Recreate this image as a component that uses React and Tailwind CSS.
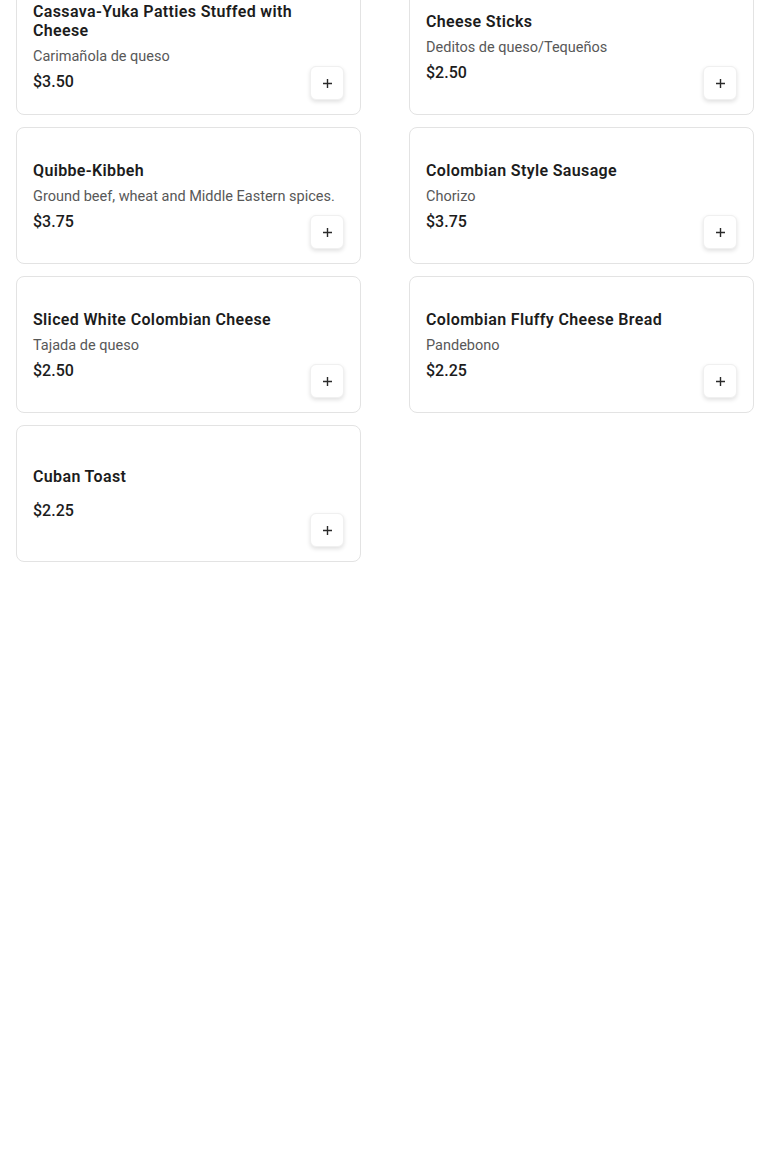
import React from "react";

const items = [
  { title: "Cassava-Yuka Patties Stuffed with Cheese", desc: "Carimañola de queso", price: "$3.50" },
  { title: "Cheese Sticks", desc: "Deditos de queso/Tequeños", price: "$2.50" },
  { title: "Quibbe-Kibbeh", desc: "Ground beef, wheat and Middle Eastern spices.", price: "$3.75" },
  { title: "Colombian Style Sausage", desc: "Chorizo", price: "$3.75" },
  { title: "Sliced White Colombian Cheese", desc: "Tajada de queso", price: "$2.50" },
  { title: "Colombian Fluffy Cheese Bread", desc: "Pandebono", price: "$2.25" },
  { title: "Cuban Toast", desc: null, price: "$2.25" },
];

function PlusIcon() {
  return (
    <svg width="11" height="11" viewBox="0 0 11 11" fill="none">
      <path d="M5.5 1v9M1 5.5h9" stroke="#2a2a2a" strokeWidth="1.4" />
    </svg>
  );
}

function Card({ item }) {
  return (
    <div className="relative h-[137px] border border-[#e3e3e3] rounded-lg bg-white flex px-4">
      <div className="flex-1 self-center flex flex-col pt-[3px] pr-4">
        <div className="text-base leading-[19px] font-semibold text-[#1c1c1c] tracking-[0.35px]">
          {item.title}
        </div>
        {item.desc && (
          <div className="mt-[7px] text-[14.5px] leading-5 text-[#585858] whitespace-nowrap">{item.desc}</div>
        )}
        <div className={(item.desc ? "mt-[3px]" : "mt-[13px]") + " text-base leading-6 font-medium text-[#1c1c1c]"}>
          {item.price}
        </div>
      </div>
      <button className="absolute right-4 bottom-[14px] w-[34px] h-[34px] rounded-md bg-white border border-[#f0f0f0] shadow-[0_2px_4px_rgba(0,0,0,0.12)] flex items-center justify-center">
        <PlusIcon />
      </button>
    </div>
  );
}

export default function App() {
  return (
    <div className="min-h-[1161px] bg-white" style={{ fontFamily: "Roboto, 'Noto Sans', sans-serif" }}>
      <div className="px-4 -mt-[22px] grid grid-cols-2 gap-x-12 gap-y-3">
        {items.map((it, i) => (
          <Card key={i} item={it} />
        ))}
      </div>
    </div>
  );
}
